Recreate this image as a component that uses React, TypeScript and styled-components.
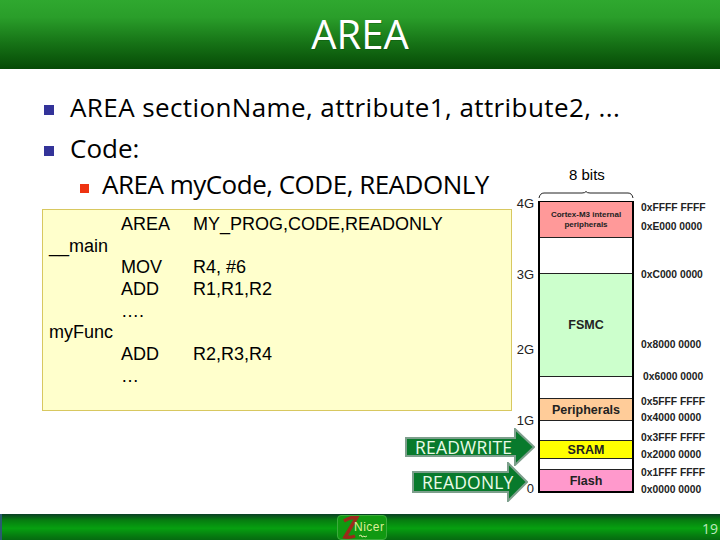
import styled, { createGlobalStyle } from "styled-components";

const GlobalStyle = createGlobalStyle`
  html, body {
    margin: 0;
    padding: 0;
    background: #fff;
  }
`;

const codeLines = [
  { label: "", op: "AREA", args: "MY_PROG,CODE,READONLY" },
  { label: "__main", op: "", args: "" },
  { label: "", op: "MOV", args: "R4, #6" },
  { label: "", op: "ADD", args: "R1,R1,R2" },
  { label: "", op: "….", args: "" },
  { label: "myFunc", op: "", args: "" },
  { label: "", op: "ADD", args: "R2,R3,R4" },
  { label: "", op: "…", args: "" },
];

const regions = [
  { name: "Cortex-M3 internal peripherals", height: 36, bg: "#ff9999", small: true },
  { name: "", height: 36, bg: "#ffffff" },
  { name: "FSMC", height: 103, bg: "#ccffcc" },
  { name: "", height: 22, bg: "#ffffff" },
  { name: "Peripherals", height: 22, bg: "#ffcc99" },
  { name: "", height: 20, bg: "#ffffff" },
  { name: "SRAM", height: 18, bg: "#ffff00" },
  { name: "", height: 11, bg: "#ffffff" },
  { name: "Flash", height: 21, bg: "#ff99cc" },
];

const sizes = [
  { text: "4G", top: 196 },
  { text: "3G", top: 267 },
  { text: "2G", top: 342 },
  { text: "1G", top: 413 },
  { text: "0", top: 481 },
];

const addresses = [
  { text: "0xFFFF FFFF", top: 201, left: 129 },
  { text: "0xE000 0000", top: 220, left: 129 },
  { text: "0xC000 0000", top: 268, left: 129 },
  { text: "0x8000 0000", top: 338, left: 129 },
  { text: "0x6000 0000", top: 370, left: 131 },
  { text: "0x5FFF FFFF", top: 395, left: 129 },
  { text: "0x4000 0000", top: 411, left: 129 },
  { text: "0x3FFF FFFF", top: 431, left: 129 },
  { text: "0x2000 0000", top: 448, left: 129 },
  { text: "0x1FFF FFFF", top: 466, left: 129 },
  { text: "0x0000 0000", top: 483, left: 129 },
];

const BlockArrow = ({ label, width, height, inset }: { label: string; width: number; height: number; inset: number }) => {
  const head = width - 20;
  const mid = height / 2;
  const points = [
    [1, inset],
    [head, inset],
    [head, 1],
    [width - 1, mid],
    [head, height - 1],
    [head, height - inset],
    [1, height - inset],
  ]
    .map((p) => p.join(","))
    .join(" ");
  return (
    <ArrowWrap $width={width} $height={height}>
      <svg width={width} height={height} viewBox={`0 0 ${width} ${height}`}>
        <polygon points={points} fill="#087a2c" stroke="#7d9f8c" strokeWidth="2" />
      </svg>
      <ArrowLabel>{label}</ArrowLabel>
    </ArrowWrap>
  );
};

const App = () => (
  <Slide>
    <GlobalStyle />
    <Header>
      <Title>AREA</Title>
    </Header>
    <Body>
      <LeftColumn>
        <Bullets>
          <Bullet $spacing={0.4}>
            <Marker />
            AREA sectionName, attribute1, attribute2, ...
          </Bullet>
          <Bullet>
            <Marker />
            Code:
          </Bullet>
          <SubBullet $spacing={-0.5}>
            <SubMarker />
            AREA myCode, CODE, READONLY
          </SubBullet>
        </Bullets>
        <CodeBox>
          {codeLines.map((line, i) => (
            <CodeRow key={i}>
              <span>{line.label}</span>
              <span>{line.op}</span>
              <span>{line.args}</span>
            </CodeRow>
          ))}
        </CodeBox>
        <Arrows>
          <BlockArrow label="READWRITE" width={130} height={38} inset={10} />
          <SecondArrow>
            <BlockArrow label="READONLY" width={116} height={40} inset={10} />
          </SecondArrow>
        </Arrows>
      </LeftColumn>
      <MemoryMap>
        <BitsLabel>8 bits</BitsLabel>
        <Brace width="96" height="8" viewBox="0 0 96 8">
          <path
            d="M1 7 Q2 2 6 2 L44 2 Q47 2 48 0.500 Q49 2 52 2 L90 2 Q94 2 95 7"
            fill="none"
            stroke="#222"
            strokeWidth="1"
          />
        </Brace>
        <Column>
          {regions.map((r, i) => (
            <Region key={i} $height={r.height} $bg={r.bg} $small={r.small}>
              {r.name}
            </Region>
          ))}
        </Column>
        {sizes.map((s) => (
          <SizeLabel key={s.text} $top={s.top - 69}>
            {s.text}
          </SizeLabel>
        ))}
        {addresses.map((a) => (
          <Address key={a.text} $top={a.top - 69} $left={a.left}>
            {a.text}
          </Address>
        ))}
      </MemoryMap>
    </Body>
    <Footer>
      <Logo>
        <LogoMark width="30" height="25" viewBox="0 0 30 25">
          <path d="M5 5 Q11 1 18 1 L6 21 Q11 22 16 20" fill="none" stroke="#9c2a1a" strokeWidth="3.500" />
          <path d="M20 20 l2 -1 l1 2 l2 -1 l1 1 l2 -1" fill="none" stroke="#d8e8a0" strokeWidth="1" />
        </LogoMark>
        <LogoText>Nicer</LogoText>
      </Logo>
      <PageNumber>19</PageNumber>
    </Footer>
  </Slide>
);

const Slide = styled.div`
  width: 720px;
  height: 540px;
  display: flex;
  flex-direction: column;
  overflow: hidden;
  background: #fff;
  color: #000;
`;

const Header = styled.header`
  box-sizing: border-box;
  height: 69px;
  padding-bottom: 2px;
  flex: none;
  display: flex;
  align-items: center;
  justify-content: center;
  background: linear-gradient(to bottom, #2fa82f 0%, #2a9e2a 25%, #157015 65%, #064a06 100%);
`;

const Title = styled.h1`
  margin: 0;
  font: 400 40px "Open Sans", "Liberation Sans", sans-serif;
  color: #fff;
  text-shadow: 1px 1px 0 rgba(0, 40, 0, 0.25);
`;

const Body = styled.main`
  flex: 1;
  display: flex;
  align-items: flex-start;
`;

const LeftColumn = styled.div`
  width: 512px;
  flex: none;
  padding-top: 17px;
`;

const Bullets = styled.ul`
  list-style: none;
  margin: 0;
  padding: 0 0 0 44px;
  font-family: "Open Sans", "Liberation Sans", sans-serif;
`;

const Bullet = styled.li<{ $spacing?: number }>`
  display: flex;
  align-items: center;
  height: 41px;
  font-size: 26px;
  letter-spacing: ${({ $spacing }) => $spacing ?? 0}px;
  white-space: nowrap;
`;

const SubBullet = styled(Bullet)`
  height: 31px;
  padding-left: 36px;
`;

const Marker = styled.i`
  width: 10px;
  height: 10px;
  margin: 6px 16px 0 0;
  flex: none;
  background: #333399;
`;

const SubMarker = styled.i`
  width: 9px;
  height: 9px;
  margin: 9px 13px 0 0;
  flex: none;
  background: #ee3311;
`;

const CodeBox = styled.div`
  box-sizing: border-box;
  width: 470px;
  height: 202px;
  margin: 10px 0 0 42px;
  padding: 4px 0 0 6px;
  background: #ffffcc;
  border: 1px solid #d8c860;
  font: 18px/21.7px "Liberation Sans", Arial, sans-serif;
`;

const CodeRow = styled.div`
  display: grid;
  grid-template-columns: 72px 72px 1fr;
  height: 21.7px;
  white-space: nowrap;
`;

const Arrows = styled.div`
  display: flex;
  flex-direction: column;
  align-items: flex-end;
  margin: 17px -23px 0 0;
`;

const SecondArrow = styled.div`
  margin: -4px 7px 0 0;
`;

const ArrowWrap = styled.div<{ $width: number; $height: number }>`
  position: relative;
  width: ${({ $width }) => $width}px;
  height: ${({ $height }) => $height}px;

  svg {
    display: block;
  }
`;

const ArrowLabel = styled.span`
  position: absolute;
  left: 10px;
  top: 0;
  bottom: 0;
  display: flex;
  align-items: center;
  color: #eafbe8;
  font: 17.500px "Open Sans", "Liberation Sans", sans-serif;
  letter-spacing: 0.2px;
  white-space: nowrap;
`;

const MemoryMap = styled.div`
  position: relative;
  flex: 1;
  align-self: stretch;
  font-family: "Liberation Sans", Arial, sans-serif;
`;

const BitsLabel = styled.div`
  position: absolute;
  left: 57px;
  top: 97px;
  font-size: 15px;
  line-height: 18px;
`;

const Brace = styled.svg`
  position: absolute;
  left: 26px;
  top: 122px;
`;

const Column = styled.div`
  position: absolute;
  left: 26px;
  top: 132px;
  width: 92px;
  border: solid #000;
  border-width: 1px 2px 2px;
`;

const Region = styled.div<{ $height: number; $bg: string; $small?: boolean }>`
  height: ${({ $height }) => $height}px;
  box-sizing: border-box;
  border-bottom: 1px solid #222;
  background: ${({ $bg }) => $bg};
  display: flex;
  align-items: center;
  justify-content: center;
  text-align: center;
  font-size: ${({ $small }) => ($small ? "8px" : "12.5px")};
  line-height: ${({ $small }) => ($small ? "10px" : "14px")};
  font-weight: 700;
  color: #222;

  &:last-child {
    border-bottom: 0;
  }
`;

const SizeLabel = styled.div`
  position: absolute;
  top: ${({ $top }: { $top: number }) => $top}px;
  right: 186px;
  font-size: 13px;
  line-height: 15px;
  color: #222;
`;

const Address = styled.div<{ $top: number; $left: number }>`
  position: absolute;
  top: ${({ $top }) => $top}px;
  left: ${({ $left }) => $left}px;
  font-size: 10.300px;
  line-height: 13px;
  font-weight: 700;
  white-space: nowrap;
  color: #222;
`;

const Footer = styled.footer`
  position: relative;
  height: 26px;
  flex: none;
  display: flex;
  justify-content: center;
  background: linear-gradient(to bottom, #0a3f24 0%, #067a10 22%, #06a010 55%, #067a10 85%, #056a10 100%);
  border-left: 2px solid #2a5a70;
`;

const Logo = styled.div`
  position: relative;
  box-sizing: border-box;
  width: 50px;
  height: 25px;
  margin: 1px 0 0 2px;
  background: #119911;
  border-radius: 4px;
  border: 1px solid #3cab3c;
`;

const LogoMark = styled.svg`
  position: absolute;
  left: 1px;
  top: 0;
`;

const LogoText = styled.span`
  position: absolute;
  left: 16px;
  top: 4px;
  font: 12px/14px "Liberation Sans", Arial, sans-serif;
  letter-spacing: 0.5px;
  color: #dcef98;
`;

const PageNumber = styled.span`
  position: absolute;
  right: 2px;
  bottom: 2px;
  font: 14px/18px "Open Sans", "Liberation Sans", sans-serif;
  color: #bfe6bf;
`;

export default App;
